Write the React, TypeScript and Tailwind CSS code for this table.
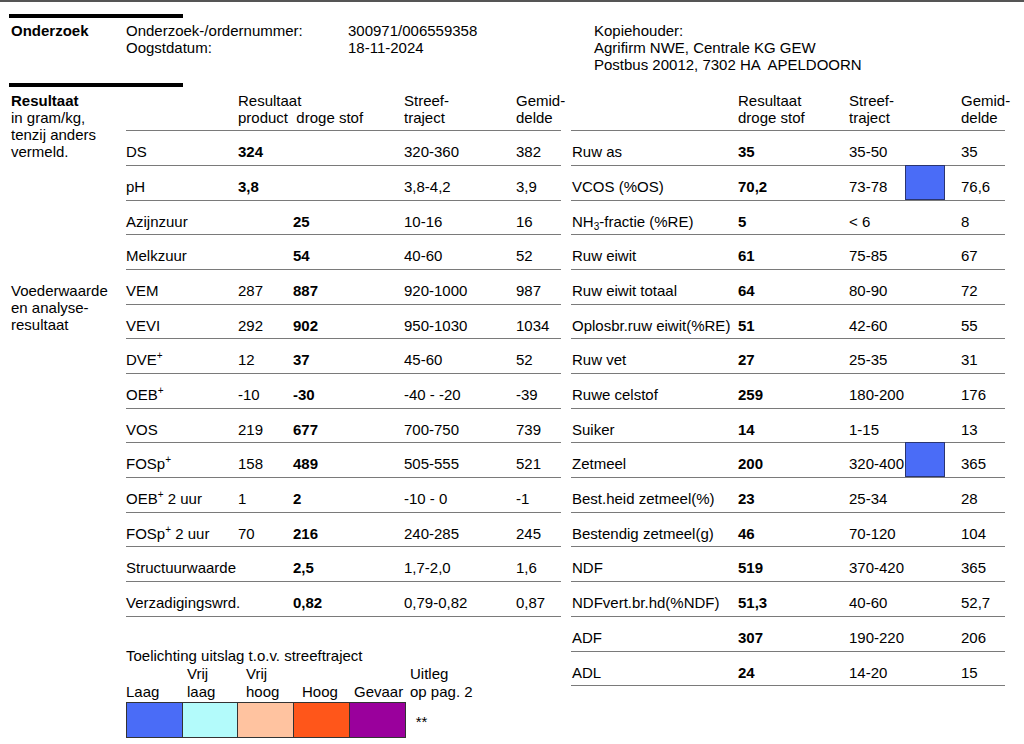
import type { ReactNode } from 'react'

type LeftRow = { label: ReactNode; product?: string; productBold?: boolean; ds?: string; range: string; avg: string }
type RightRow = { label: ReactNode; ds: string; range: string; flag?: boolean; avg: string }

const Plus = () => <sup className="text-[10px] relative -top-[6px]">+</sup>

const leftRows: LeftRow[] = [
  { label: 'DS', product: '324', productBold: true, range: '320-360', avg: '382' },
  { label: 'pH', product: '3,8', productBold: true, range: '3,8-4,2', avg: '3,9' },
  { label: 'Azijnzuur', ds: '25', range: '10-16', avg: '16' },
  { label: 'Melkzuur', ds: '54', range: '40-60', avg: '52' },
  { label: 'VEM', product: '287', ds: '887', range: '920-1000', avg: '987' },
  { label: 'VEVI', product: '292', ds: '902', range: '950-1030', avg: '1034' },
  { label: <>DVE<Plus /></>, product: '12', ds: '37', range: '45-60', avg: '52' },
  { label: <>OEB<Plus /></>, product: '-10', ds: '-30', range: '-40 - -20', avg: '-39' },
  { label: 'VOS', product: '219', ds: '677', range: '700-750', avg: '739' },
  { label: <>FOSp<Plus /></>, product: '158', ds: '489', range: '505-555', avg: '521' },
  { label: <>OEB<Plus /> 2 uur</>, product: '1', ds: '2', range: '-10 - 0', avg: '-1' },
  { label: <>FOSp<Plus /> 2 uur</>, product: '70', ds: '216', range: '240-285', avg: '245' },
  { label: 'Structuurwaarde', ds: '2,5', range: '1,7-2,0', avg: '1,6' },
  { label: 'Verzadigingswrd.', ds: '0,82', range: '0,79-0,82', avg: '0,87' },
]

const rightRows: RightRow[] = [
  { label: 'Ruw as', ds: '35', range: '35-50', avg: '35' },
  { label: 'VCOS (%OS)', ds: '70,2', range: '73-78', flag: true, avg: '76,6' },
  { label: <>NH<sub className="text-[10px] relative top-[3px]">3</sub>-fractie (%RE)</>, ds: '5', range: '< 6', avg: '8' },
  { label: 'Ruw eiwit', ds: '61', range: '75-85', avg: '67' },
  { label: 'Ruw eiwit totaal', ds: '64', range: '80-90', avg: '72' },
  { label: 'Oplosbr.ruw eiwit(%RE)', ds: '51', range: '42-60', avg: '55' },
  { label: 'Ruw vet', ds: '27', range: '25-35', avg: '31' },
  { label: 'Ruwe celstof', ds: '259', range: '180-200', avg: '176' },
  { label: 'Suiker', ds: '14', range: '1-15', avg: '13' },
  { label: 'Zetmeel', ds: '200', range: '320-400', flag: true, avg: '365' },
  { label: 'Best.heid zetmeel(%)', ds: '23', range: '25-34', avg: '28' },
  { label: 'Bestendig zetmeel(g)', ds: '46', range: '70-120', avg: '104' },
  { label: 'NDF', ds: '519', range: '370-420', avg: '365' },
  { label: 'NDFvert.br.hd(%NDF)', ds: '51,3', range: '40-60', avg: '52,7' },
  { label: 'ADF', ds: '307', range: '190-220', avg: '206' },
  { label: 'ADL', ds: '24', range: '14-20', avg: '15' },
]

const legend = [
  { top: '', bottom: 'Laag', pad: 'pl-0', color: 'bg-[#4a6cf7]' },
  { top: 'Vrij', bottom: 'laag', pad: 'pl-[5px]', color: 'bg-[#b3fbfb]' },
  { top: 'Vrij', bottom: 'hoog', pad: 'pl-[8px]', color: 'bg-[#ffc3a0]' },
  { top: '', bottom: 'Hoog', pad: 'pl-[9px]', color: 'bg-[#ff561a]' },
  { top: '', bottom: 'Gevaar', pad: 'pl-[5px]', color: 'bg-[#9a009c]' },
]

export default function App() {
  return (
    <div className="w-[1024px] h-[744px] overflow-hidden bg-white text-black font-['Liberation_Sans',Arial,sans-serif] text-[15px] leading-[17px]">
      <div className="h-[2px] bg-[#555]" />

      <div className="pl-[9px] pt-[12px]">
        <div className="w-[174px] h-[4px] bg-black" />
      </div>

      {/* onderzoek */}
      <div className="mt-[4px] flex pl-[11px]">
        <div className="w-[115px] font-bold">Onderzoek</div>
        <div className="w-[222px]">
          <div>Onderzoek-/ordernummer:</div>
          <div>Oogstdatum:</div>
        </div>
        <div className="w-[246px]">
          <div>300971/006559358</div>
          <div>18-11-2024</div>
        </div>
        <div>
          <div>Kopiehouder:</div>
          <div>Agrifirm NWE, Centrale KG GEW</div>
          <div className="whitespace-pre">Postbus 20012, 7302 HA  APELDOORN</div>
        </div>
      </div>

      <div className="pl-[9px] mt-[10px]">
        <div className="w-[174px] h-[4px] bg-black" />
      </div>

      {/* resultaat */}
      <div className="mt-[4.5px] flex">
        <div className="w-[126px] pl-[11px]">
          <div className="font-bold">Resultaat</div>
          <div>in gram/kg,</div>
          <div>tenzij anders</div>
          <div>vermeld.</div>
          <div className="mt-[122px]">
            <div>Voederwaarde</div>
            <div>en analyse-</div>
            <div>resultaat</div>
          </div>
        </div>

        <div className="w-[435px]">
          <div className="grid grid-cols-[112px_55px_111px_112px_1fr] h-[39.7px] border-b border-[#7a7a7a]">
            <div />
            <div className="col-span-2">
              <div>Resultaat</div>
              <div>product&nbsp;&nbsp;droge stof</div>
            </div>
            <div>
              <div>Streef-</div>
              <div>traject</div>
            </div>
            <div>
              <div>Gemid-</div>
              <div>delde</div>
            </div>
          </div>
          {leftRows.map((r, i) => (
            <div key={i} className="grid grid-cols-[112px_55px_111px_112px_1fr] h-[34.7px] border-b border-[#7a7a7a] pt-[12px] whitespace-nowrap">
              <div>{r.label}</div>
              <div className={r.productBold ? 'font-bold' : ''}>{r.product}</div>
              <div className="font-bold">{r.ds}</div>
              <div>{r.range}</div>
              <div>{r.avg}</div>
            </div>
          ))}

          <div className="mt-[30px] leading-[18px]">
            <div>Toelichting uitslag t.o.v. streeftraject</div>
            <div className="grid grid-cols-[56px_56px_55px_56px_56px_auto]">
              {legend.map((l, i) => (
                <div key={i} className={l.pad}>
                  <div className="h-[18px]">{l.top}</div>
                  <div>{l.bottom}</div>
                </div>
              ))}
              <div className="pl-[5px]">
                <div>Uitleg</div>
                <div>op pag.&nbsp;2</div>
              </div>
            </div>
            <div className="mt-[1.5px] flex items-center">
              <div className="flex h-[36px] border border-[#333]">
                {legend.map((l, i) => (
                  <div key={i} className={`${l.color} ${i < 4 ? 'w-[55.7px] border-r border-[#333]' : 'w-[55px]'}`} />
                ))}
              </div>
              <div className="pl-[10px] pt-[4px]">**</div>
            </div>
          </div>
        </div>

        <div className="ml-[10px] w-[434px]">
          <div className="grid grid-cols-[167px_111px_112px_1fr] h-[39.7px] border-b border-[#7a7a7a]">
            <div />
            <div>
              <div>Resultaat</div>
              <div>droge stof</div>
            </div>
            <div>
              <div>Streef-</div>
              <div>traject</div>
            </div>
            <div>
              <div>Gemid-</div>
              <div>delde</div>
            </div>
          </div>
          {rightRows.map((r, i) => (
            <div key={i} className="grid grid-cols-[167px_111px_56px_40px_1fr] h-[34.7px] border-b border-[#7a7a7a] whitespace-nowrap">
              <div className="pl-[1px] pt-[12px]">{r.label}</div>
              <div className="pt-[12px] font-bold">{r.ds}</div>
              <div className="pt-[12px]">{r.range}</div>
              <div className={r.flag ? '-mt-[1px] bg-[#4a6cf7] border border-[#2a3570]' : ''} />
              <div className="pl-[16px] pt-[12px]">{r.avg}</div>
            </div>
          ))}
        </div>
      </div>
    </div>
  )
}
